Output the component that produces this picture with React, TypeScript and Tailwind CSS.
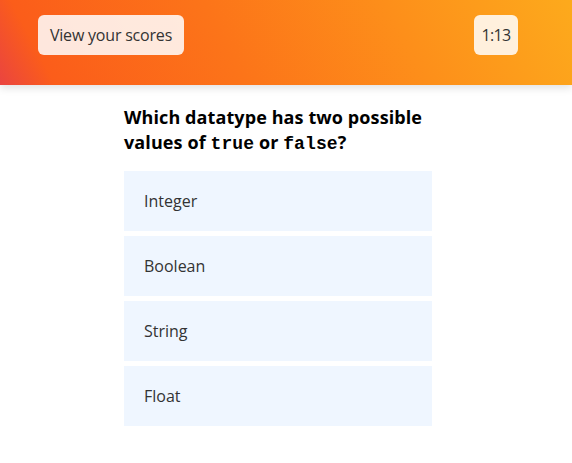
import { useState } from "react";

const options = ["Integer", "Boolean", "String", "Float"];

const App = () => {
  const [picked, setPicked] = useState<string | null>(null);

  return (
    <div className="min-h-screen bg-white font-['Open_Sans','Noto_Sans',sans-serif] text-[#2d2d2d]">
      <header className="h-[85px] bg-[linear-gradient(62deg,#ea4440_0%,#fb5d1a_9%,#fc7419_40%,#fd8f1a_70%,#fdaa1c_100%)] shadow-[0_3px_8px_rgba(0,0,0,0.12)] flex items-start justify-between pl-[38px] pr-[54px] pt-[15px]">
        <button className="h-10 w-[146px] rounded-md bg-white/85 text-[16px] text-[#333] tracking-[-0.2px]">
          View your scores
        </button>
        <div className="h-10 w-11 rounded-md bg-white/85 flex items-center justify-center text-[16px] text-[#333] tracking-[-0.6px]">
          1:13
        </div>
      </header>

      <main className="pr-4 pt-[20px]">
        <div className="mx-auto w-[308px]">
          <h2 className="text-[18px] font-bold leading-[25px] text-black tracking-[0.1px]">
            Which datatype has two possible values of{" "}
            <code className="font-['Liberation_Mono',monospace] text-[18px] leading-none">true</code> or{" "}
            <code className="font-['Liberation_Mono',monospace] text-[18px] leading-none">false</code>?
          </h2>
          <ul className="mt-[16px] flex flex-col gap-[5px]">
            {options.map((opt) => (
              <li key={opt}>
                <button
                  onClick={() => setPicked(opt)}
                  className={`w-full h-[60px] px-5 text-left text-[16px] text-[#333] ${
                    picked === opt ? "bg-blue-100" : "bg-[#eff6ff]"
                  }`}
                >
                  {opt}
                </button>
              </li>
            ))}
          </ul>
        </div>
      </main>
    </div>
  );
};

export default App;
